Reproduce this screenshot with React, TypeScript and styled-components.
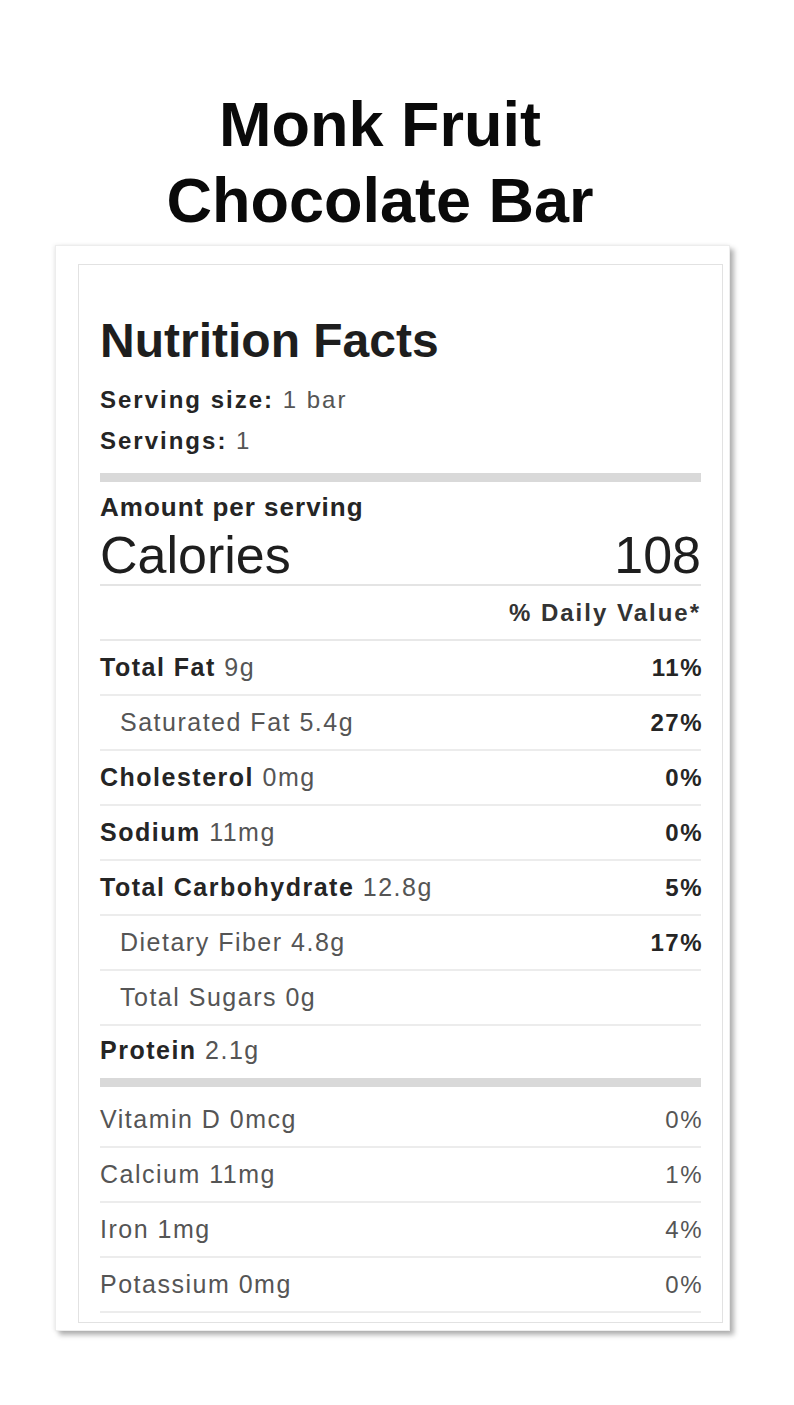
import React from "react";
import styled, { createGlobalStyle } from "styled-components";

type Nutrient = {
    label: string;
    amount: string;
    percent?: string;
    sub?: boolean;
};

const nutrients: Nutrient[] = [
    { label: "Total Fat", amount: "9g", percent: "11%" },
    { label: "Saturated Fat", amount: "5.4g", percent: "27%", sub: true },
    { label: "Cholesterol", amount: "0mg", percent: "0%" },
    { label: "Sodium", amount: "11mg", percent: "0%" },
    { label: "Total Carbohydrate", amount: "12.8g", percent: "5%" },
    { label: "Dietary Fiber", amount: "4.8g", percent: "17%", sub: true },
    { label: "Total Sugars", amount: "0g", sub: true },
];

const vitamins = [
    { label: "Vitamin D 0mcg", percent: "0%" },
    { label: "Calcium 11mg", percent: "1%" },
    { label: "Iron 1mg", percent: "4%" },
    { label: "Potassium 0mg", percent: "0%" },
];

const App = () => {
    return (
        <Page>
            <GlobalStyle />
            <Title>
                Monk Fruit
                <br />
                Chocolate Bar
            </Title>
            <Card>
                <Panel>
                    <Heading>Nutrition Facts</Heading>
                    <ServingLine>
                        <b>Serving size:</b> 1 bar
                    </ServingLine>
                    <ServingLine>
                        <b>Servings:</b> 1
                    </ServingLine>
                    <ThickBar />
                    <AmountLabel>Amount per serving</AmountLabel>
                    <CaloriesRow>
                        <span>Calories</span>
                        <span>108</span>
                    </CaloriesRow>
                    <DailyRow>% Daily Value*</DailyRow>
                    {nutrients.map(item => (
                        <Row key={item.label}>
                            <Label $sub={item.sub}>
                                {item.sub ? item.label : <b>{item.label}</b>}{" "}
                                {item.amount}
                            </Label>
                            {item.percent && <Percent>{item.percent}</Percent>}
                        </Row>
                    ))}
                    <ProteinRow>
                        <Label>
                            <b>Protein</b> 2.1g
                        </Label>
                    </ProteinRow>
                    <ThickBar $tight />
                    <VitaminList>
                        {vitamins.map(item => (
                            <Row key={item.label}>
                                <Label>{item.label}</Label>
                                <Percent $light>{item.percent}</Percent>
                            </Row>
                        ))}
                    </VitaminList>
                </Panel>
            </Card>
        </Page>
    );
};

export default App;

const GlobalStyle = createGlobalStyle`
    body {
        margin: 0;
        background: #ffffff;
        font-family: "Liberation Sans", Arial, Helvetica, sans-serif;
    }
`;

const Page = styled.div`
    width: 794px;
    min-height: 1405px;
    padding-top: 86px;
    box-sizing: border-box;
    background: #fff;
`;

const Title = styled.h1`
    margin: 0;
    padding-right: 34px;
    font-size: 63px;
    line-height: 76px;
    font-weight: 700;
    text-align: center;
    color: #0a0a0a;
`;

const Card = styled.div`
    margin: 7px 0 0 55px;
    width: 675px;
    padding: 18px 6px 7px 22px;
    box-sizing: border-box;
    background: #fff;
    border: 1px solid #ededed;
    box-shadow: 4px 4px 5px rgba(0, 0, 0, 0.3), -1px 0 4px rgba(0, 0, 0, 0.08);
`;

const Panel = styled.div`
    border: 1px solid #e2e2e2;
    padding: 47px 21px 9px 21px;
    color: #2a2a2a;
    letter-spacing: 1.5px;
    b {
        font-weight: 700;
        color: #252525;
    }
`;

const Heading = styled.h2`
    margin: 0;
    font-size: 48px;
    line-height: 58px;
    font-weight: 700;
    letter-spacing: 0;
    color: #1e1e1e;
`;

const ServingLine = styled.div`
    font-size: 24px;
    line-height: 41px;
    letter-spacing: 2px;
    color: #555;
    &:first-of-type {
        margin-top: 9px;
    }
`;

const ThickBar = styled.div<{ $tight?: boolean }>`
    height: 9px;
    margin-top: ${p => (p.$tight ? "4px" : "12px")};
    background: #d9d9d9;
`;

const AmountLabel = styled.div`
    margin-top: 10px;
    font-size: 26px;
    line-height: 30px;
    font-weight: 700;
    letter-spacing: 1px;
    color: #252525;
`;

const CaloriesRow = styled.div`
    display: flex;
    justify-content: space-between;
    margin-top: 5px;
    font-size: 52px;
    line-height: 57px;
    letter-spacing: 0;
    color: #1e1e1e;
    border-bottom: 2px solid #e4e4e4;
`;

const DailyRow = styled.div`
    height: 53px;
    display: flex;
    align-items: center;
    justify-content: flex-end;
    font-size: 24px;
    font-weight: 700;
    letter-spacing: 2px;
    color: #333;
    border-bottom: 2px solid #e8e8e8;
`;

const Row = styled.div`
    height: 53px;
    display: flex;
    align-items: center;
    justify-content: space-between;
    border-bottom: 2px solid #ececec;
`;

const ProteinRow = styled(Row)`
    height: 48px;
    border-bottom: none;
`;

const Label = styled.span<{ $sub?: boolean }>`
    padding-left: ${p => (p.$sub ? "20px" : "0")};
    font-size: 25px;
    color: #555;
`;

const Percent = styled.span<{ $light?: boolean }>`
    font-size: 24px;
    font-weight: ${p => (p.$light ? 400 : 700)};
    color: ${p => (p.$light ? "#555" : "#252525")};
    margin-right: -2px;
`;

const VitaminList = styled.div`
    margin-top: 6px;
`;
